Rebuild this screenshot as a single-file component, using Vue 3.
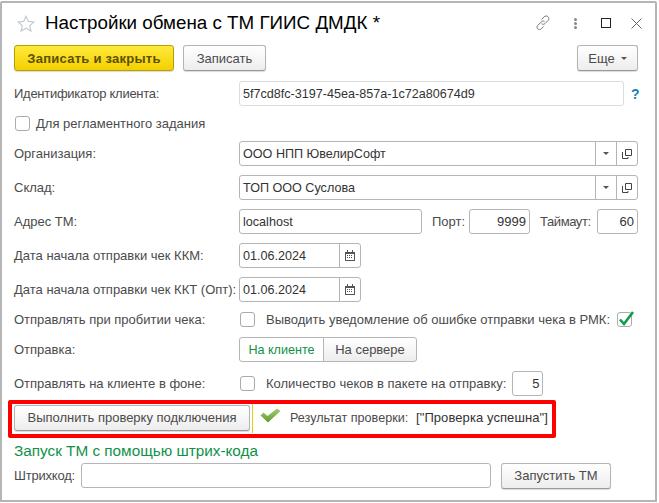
<script setup>
const rows = { id: '5f7cd8fc-3197-45ea-857a-1c72a80674d9' }
</script>

<template>
  <div class="window">
    <div class="titlebar">
      <svg class="star" width="18" height="17" viewBox="0 0 18 17">
        <path d="M9 1.200l2.300 5.200 5.600.5-4.200 3.700 1.300 5.500L9 13.200l-5 2.900 1.300-5.500L1.100 6.900l5.600-.5z" fill="#fff" stroke="#c4c8cc" stroke-width="1.100" />
      </svg>
      <h1>Настройки обмена с ТМ ГИИС ДМДК *</h1>
      <div class="title-icons">
        <svg class="ic-link" width="16" height="16" viewBox="0 0 16 16" fill="none" stroke="#777" stroke-width="1">
          <path d="M6.500 4.500l2.600-2.700c1.100-1.100 2.900-1.100 3.900-.1 1.100 1.100 1.100 2.700 0 3.800l-3 3c-1 1-2.400 1.100-3.400.2" />
          <path d="M9.500 6.500c-.9-.7-2.300-.6-3.200.3l-3.400 3.500c-1.100 1.100-1.200 2.500-.2 3.500 1 1 2.500 1 3.600 0l2.300-2.300" />
        </svg>
        <span class="dots"><i></i><i></i><i></i></span>
        <span class="maxi"></span>
        <svg class="ic-close" width="11" height="11" viewBox="0 0 11 11" stroke="#666" stroke-width="1"><path d="M.5.500l10 10M10.500.500l-10 10" /></svg>
      </div>
    </div>

    <div class="toolbar">
      <button class="btn primary">Записать и закрыть</button>
      <button class="btn save">Записать</button>
      <button class="btn more">Еще<span class="caret"></span></button>
    </div>

    <div class="form">
      <div class="row">
        <label class="lbl tight">Идентификатор клиента:</label>
        <div class="field light id-field">{{ rows.id }}</div>
        <span class="help">?</span>
      </div>

      <div class="row small">
        <span class="chk"></span>
        <span class="chk-text">Для регламентного задания</span>
      </div>

      <div class="row">
        <label class="lbl">Организация:</label>
        <div class="field wide">
          <span class="val">ООО НПП ЮвелирСофт</span>
          <span class="cell"><span class="caret"></span></span>
          <span class="cell">
            <svg width="10" height="10" viewBox="0 0 10 10" fill="none" stroke="#444"><path d="M3.500.5h6v6h-6z" /><path d="M.5 3v6.500h5.500V8" /></svg>
          </span>
        </div>
      </div>

      <div class="row">
        <label class="lbl">Склад:</label>
        <div class="field wide">
          <span class="val">ТОП ООО Суслова</span>
          <span class="cell"><span class="caret"></span></span>
          <span class="cell">
            <svg width="10" height="10" viewBox="0 0 10 10" fill="none" stroke="#444"><path d="M3.500.5h6v6h-6z" /><path d="M.5 3v6.500h5.500V8" /></svg>
          </span>
        </div>
      </div>

      <div class="row">
        <label class="lbl">Адрес ТМ:</label>
        <div class="field addr"><span class="val">localhost</span></div>
        <span class="lbl-side port-lbl">Порт:</span>
        <div class="field port"><span class="val num">9999</span></div>
        <span class="lbl-side time-lbl">Таймаут:</span>
        <div class="field timeout"><span class="val num">60</span></div>
      </div>

      <div class="row" v-for="d in ['Дата начала отправки чек ККМ:', 'Дата начала отправки чек ККТ (Опт):']" :key="d">
        <label class="lbl">{{ d }}</label>
        <div class="field date">
          <span class="val">01.06.2024</span>
          <span class="cell cal">
            <svg width="10" height="11" viewBox="0 0 10 11">
              <path d="M0 2h10v9H0z" fill="#555" />
              <path d="M1 4h8v6H1z" fill="#fff" />
              <path d="M2 0h1v3H2zM7 0h1v3H7z" fill="#555" />
              <path d="M2 5h1v1H2zM4 5h1v1H4zM6 5h1v1H6zM2 7h1v1H2zM4 7h1v1H4zM6 7h1v1H6z" fill="#555" />
            </svg>
          </span>
        </div>
      </div>

      <div class="row small">
        <label class="lbl">Отправлять при пробитии чека:</label>
        <span class="chk in-form"></span>
        <span class="chk-text long">Выводить уведомление об ошибке отправки чека в РМК:</span>
        <span class="chk checked">
          <svg width="18" height="15" viewBox="0 0 18 15"><path d="M3 7.500l4 4.500 9-12" fill="none" stroke="#0f9d4c" stroke-width="2.600" /></svg>
        </span>
      </div>

      <div class="row">
        <label class="lbl">Отправка:</label>
        <div class="toggle">
          <span class="t-on">На клиенте</span>
          <span class="t-off">На сервере</span>
        </div>
      </div>

      <div class="row">
        <label class="lbl">Отправлять на клиенте в фоне:</label>
        <span class="chk in-form"></span>
        <span class="chk-text long">Количество чеков в пакете на отправку:</span>
        <div class="field count"><span class="val num">5</span></div>
      </div>

      <div class="row check-row">
        <div class="red-frame"></div>
        <button class="btn check-btn">Выполнить проверку подключения</button>
        <span class="yellow-line"></span>
        <svg class="ok" width="21" height="15" viewBox="0 0 21 15">
          <defs>
            <linearGradient id="okg" x1="0" y1="0" x2="0" y2="1">
              <stop offset="0" stop-color="#a5cf6a" />
              <stop offset="1" stop-color="#5d9a35" />
            </linearGradient>
          </defs>
          <path d="M0.500 7.500l3-3 4 3.500L17 0.500l3.500 2.500L8 14.500z" fill="url(#okg)" />
        </svg>
        <span class="res-lbl">Результат проверки:</span>
        <span class="res-val">["Проверка успешна"]</span>
      </div>

      <div class="heading">Запуск ТМ с помощью штрих-кода</div>

      <div class="row">
        <label class="lbl code-lbl">Штрихкод:</label>
        <div class="field code"></div>
        <button class="btn run">Запустить ТМ</button>
      </div>
    </div>
  </div>
</template>

<style>
html, body { margin: 0; background: #fff; }
</style>

<style scoped>
.window {
  box-sizing: border-box;
  width: 657px;
  height: 501px;
  margin: 1px 0 0 0;
  border: 2px solid #b5b5b5;
  border-radius: 2px 2px 0 0;
  font-family: "Liberation Sans", Arial, sans-serif;
  font-size: 13px;
  color: #4b4b4b;
  background: #fff;
  overflow: hidden;
}
.titlebar {
  display: flex;
  align-items: center;
  height: 40px;
  margin-bottom: 2px;
  padding: 0 13px 0 14px;
}
.star { margin-left: 1px; }
h1 {
  margin: 0 0 0 10px;
  font-size: 18.8px;
  font-weight: 400;
  color: #000;
}
.title-icons { margin-left: auto; display: flex; align-items: center; }
.ic-link { margin-right: 23px; }
.dots { display: flex; flex-direction: column; gap: 1px; margin-right: 24px; }
.dots i { width: 3px; height: 3px; background: #888; border-radius: 50%; }
.maxi { width: 8px; height: 8px; border: 1px solid #222; margin-right: 20px; }
.toolbar {
  display: flex;
  height: 26px;
  padding: 0 17px 0 12px;
  margin-bottom: 10px;
  gap: 9px;
}
.btn {
  box-sizing: border-box;
  height: 26px;
  padding: 0;
  border: 1px solid #b4b4b4;
  border-bottom-color: #9a9a9a;
  border-radius: 3px;
  background: linear-gradient(#fff, #ededed);
  box-shadow: 0 1px 1px rgba(0, 0, 0, .15);
  font: inherit;
  color: #4b4b4b;
}
.primary {
  width: 160px;
  border-color: #b8a000;
  background: linear-gradient(#fee93b, #f4d000);
  font-weight: 700;
  letter-spacing: .25px;
  color: #5c5000;
}
.save { width: 83px; }
.more {
  width: 61px;
  margin-left: auto;
  display: flex;
  align-items: center;
  justify-content: center;
  gap: 6px;
}
.caret {
  display: inline-block;
  width: 0;
  height: 0;
  border-left: 3px solid transparent;
  border-right: 3px solid transparent;
  border-top: 3px solid #555;
}
.form {
  display: flex;
  flex-direction: column;
  gap: 9px;
  padding: 0 0 0 12px;
}
.row {
  display: flex;
  align-items: center;
  height: 25px;
  position: relative;
}
.row.small { height: 17px; }
.lbl { width: 225px; flex: none; white-space: nowrap; }
.tight { letter-spacing: -.27px; }
.field {
  box-sizing: border-box;
  height: 25px;
  display: flex;
  align-items: center;
  flex: none;
  border: 1px solid #b5b5b5;
  border-radius: 3px;
  color: #333;
  font-size: 12.6px;
  background: #fff;
}
.field.light { border-color: #dcdcdc; }
.val { padding: 0 3px; flex: 1; white-space: nowrap; }
.num { text-align: right; font-size: 13px; }
.id-field { width: 385px; padding-left: 3px; }
.help { margin-left: 7px; color: #1c7fb5; font-weight: 700; font-size: 14px; }
.chk {
  box-sizing: border-box;
  width: 15px;
  height: 15px;
  flex: none;
  margin-left: 1px;
  border: 1px solid #ababab;
  border-radius: 3px;
  position: relative;
}
.chk-text { margin-left: 6px; white-space: nowrap; }
.in-form { margin-left: 1px; }
.chk-text.long { margin-left: 11px; }
.checked { margin-left: 7px; }
.checked svg { position: absolute; left: -1px; top: -1px; overflow: visible; }
.wide { width: 399px; }
.cell {
  box-sizing: border-box;
  width: 21px;
  height: 100%;
  flex: none;
  display: flex;
  align-items: center;
  justify-content: center;
  border-left: 1px solid #b5b5b5;
}
.addr { width: 183px; }
.lbl-side { flex: none; }
.port-lbl { margin-left: 10px; width: 37px; }
.port { width: 61px; }
.time-lbl { margin-left: 10px; width: 57px; letter-spacing: -.4px; }
.timeout { width: 41px; }
.date { width: 122px; }
.toggle { display: flex; height: 25px; }
.toggle span {
  box-sizing: border-box;
  display: flex;
  align-items: center;
  justify-content: center;
  border: 1px solid #b5b5b5;
}
.t-on {
  width: 85px;
  color: #0f9148;
  font-size: 12.6px;
  border-radius: 3px 0 0 3px;
}
.t-off {
  width: 94px;
  margin-left: -1px;
  border-radius: 0 3px 3px 0;
  background: linear-gradient(#fff, #ededed);
}
.count { width: 31px; margin-left: 6px; }
.red-frame {
  position: absolute;
  left: -6px;
  top: -5px;
  width: 540px;
  height: 30px;
  border: 4px solid #f00;
  border-radius: 2px;
  pointer-events: none;
}
.check-btn { width: 236px; }
.yellow-line { width: 1px; height: 30px; margin-left: 2px; background: #f2c811; }
.ok { margin: -5px 0 0 7px; }
.res-lbl { margin-left: 9px; width: 126px; font-size: 12.6px; }
.res-val { color: #333; white-space: nowrap; letter-spacing: .08px; }
.heading {
  height: 15px;
  line-height: 23px;
  font-size: 15.3px;
  color: #0f9148;
}
.code-lbl { width: 67px; letter-spacing: -.2px; }
.code { width: 410px; }
.run { width: 110px; margin-left: 10px; }
</style>
